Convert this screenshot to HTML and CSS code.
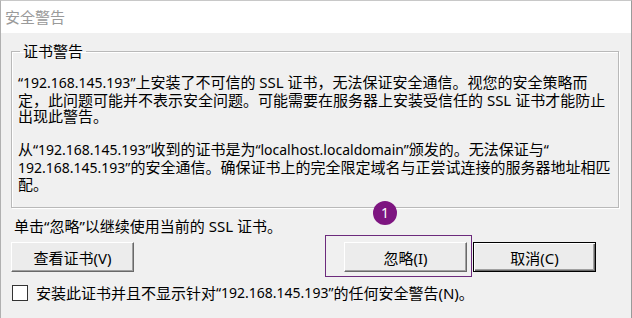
FILE: index.html
```html
<!DOCTYPE html>
<html lang="zh-CN">

<head>
    <meta charset="UTF-8">
    <meta name="viewport" content="width=device-width, initial-scale=1.0">
    <title>安全警告</title>
    <link rel="stylesheet" href="styles.css">
</head>

<body>
    <div class="window">
        <div class="titlebar">安全警告</div>

        <div class="content">
            <fieldset class="group">
                <legend>证书警告</legend>
                <p><span class="en">“192.168.145.193”</span>上安装了不可信的 SSL 证书，无法保证安全通信。视您的安全策略而<br>定，此问题可能并不表示安全问题。可能需要在服务器上安装受信任的 SSL 证书才能防止<br>出现此警告。</p>
                <p>从<span class="en">“192.168.145.193”</span>收到的证书是为<span class="en">“localhost.localdomain”</span>颁发的。无法保证与<span class="en">“</span><br><span class="en">192.168.145.193”</span>的安全通信。确保证书上的完全限定域名与正尝试连接的服务器地址相匹<br>配。</p>
            </fieldset>

            <p class="hint">单击“忽略”以继续使用当前的 SSL 证书。</p>

            <div class="actions">
                <button class="btn">查看证书(V)</button>
                <div class="highlight">
                    <span class="badge">1</span>
                    <button class="btn">忽略(I)</button>
                </div>
                <button class="btn default">取消(C)</button>
            </div>

            <label class="check">
                <span class="box"></span>
                安装此证书并且不显示针对<span class="en">“192.168.145.193”</span>的任何安全警告(N)。
            </label>
        </div>
    </div>
</body>

</html>
```

FILE: styles.css
```css
* {
    box-sizing: border-box;
    font-family: "Noto Sans", "Noto Sans CJK SC", sans-serif;
}

html,
body {
    margin: 0;
    background-color: #f0f0f0;
}

.window {
    width: 632px;
    height: 318px;
    border-top: 1px solid #c8c8c8;
    border-left: 1px solid #b0b0b0;
    border-right: 1px solid #9a9a9a;
    background-color: #f0f0f0;
    color: #000;
}

.titlebar {
    height: 32px;
    padding: 6px 0 0 4px;
    background-color: #fff;
    color: #9a9a9a;
    font-size: 15px;
    line-height: 20px;
}

.content {
    padding: 0 12px 0 10px;
    font-size: 15px;
    line-height: 16.5px;
}

.en {
    font-size: 14px;
}

.group {
    margin: 9px 0 0;
    padding: 14px 6px 14px;
    border: 1px solid #b9b9b9;
    box-shadow: inset 1px 1px 0 #fff, 1px 1px 0 #fff;
}

.group legend {
    margin-left: 2px;
    padding: 0 3px;
    font-size: 15px;
    line-height: 18px;
}

.group p {
    margin: 0;
    white-space: nowrap;
}

.group p + p {
    margin-top: 16.5px;
}

.hint {
    margin: 10px 0 0 3px;
    white-space: nowrap;
}

.actions {
    display: flex;
    align-items: center;
    margin-top: 8px;
    padding-right: 23px;
}

.btn {
    width: 123px;
    height: 30px;
    padding: 0;
    background-color: #ececec;
    border: 1px solid;
    border-color: #fff #696969 #696969 #fff;
    box-shadow: inset -1px -1px 0 #a0a0a0;
    font-size: 15px;
    color: #000;
}

.highlight {
    position: relative;
    margin-left: auto;
    margin-right: 6px;
}

.highlight::before {
    content: "";
    position: absolute;
    top: -7px;
    right: -5px;
    bottom: -5px;
    left: -19px;
    border: 1px solid #6c2a7c;
}

.badge {
    position: absolute;
    top: -41px;
    left: 29px;
    width: 24px;
    height: 24px;
    border-radius: 50%;
    background-color: #7d1580;
    color: #fff;
    font-size: 14px;
    line-height: 24px;
    text-align: center;
}

.btn.default {
    border: 1px solid #000;
    box-shadow: inset 1px 1px 0 #fff, inset -1px -1px 0 #696969, inset -2px -2px 0 #a0a0a0;
}

.check {
    display: flex;
    align-items: center;
    margin-top: 13px;
    white-space: nowrap;
}

.check .box {
    width: 16px;
    height: 16px;
    margin: 0 8px 0 1px;
    background-color: #fff;
    border: 1px solid #333;
}
```
